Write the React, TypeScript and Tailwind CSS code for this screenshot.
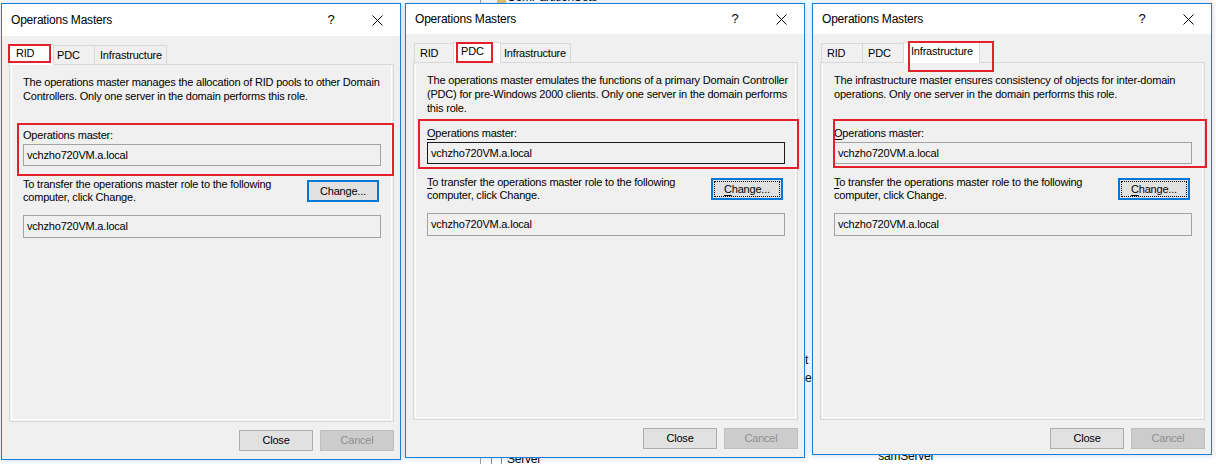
import React from "react";

type Role = {
    active: number;
    desc: string[];
    focused: boolean;
    outer: string;
    titleBar: string;
    bottomGap: string;
};

const tabs = [
    { label: "RID", w: "w-[42px]", ws: "w-[46px]" },
    { label: "PDC", w: "w-[44px]", ws: "w-[48px]" },
    { label: "Infrastructure", w: "w-[73px]", ws: "w-[77px]" },
];

const roles: Role[] = [
    {
        active: 0,
        desc: [
            "The operations master manages the allocation of RID pools to other Domain",
            "Controllers. Only one server in the domain performs this role.",
        ],
        focused: false,
        outer: "ml-[1px] h-[457px]",
        titleBar: "h-[32px]",
        bottomGap: "pb-[8px]",
    },
    {
        active: 1,
        desc: [
            "The operations master emulates the functions of a primary Domain Controller",
            "(PDC) for pre-Windows 2000 clients. Only one server in the domain performs",
            "this role.",
        ],
        focused: true,
        outer: "ml-[4px] h-[455px]",
        titleBar: "h-[30px]",
        bottomGap: "pb-[8px]",
    },
    {
        active: 2,
        desc: [
            "The infrastructure master ensures consistency of objects for inter-domain",
            "operations. Only one server in the domain performs this role.",
        ],
        focused: false,
        outer: "ml-[7px] h-[452px]",
        titleBar: "h-[30px]",
        bottomGap: "pb-[5px]",
    },
];

const Tabs = ({ active }: { active: number }) => {
    return (
        <div className="relative z-10 mt-[8px] flex h-[20px] items-end pl-[8px]">
            {tabs.map((t, i) => {
                const sel = i === active;
                if (sel) {
                    return (
                        <div
                            key={t.label}
                            className={`relative z-10 -mb-px flex h-[21px] items-start border border-b-0 border-[#d9d9d9] bg-white pl-[7px] pt-px leading-[14px] ${t.ws} ${i === 0 ? "-ml-[2px]" : "-ml-[3px]"} -mr-[2px]`}
                        >
                            {t.label}
                        </div>
                    );
                }
                return (
                    <div
                        key={t.label}
                        className={`flex h-[19px] items-center border border-b-0 border-[#d9d9d9] bg-[#f0f0f0] pl-[5px] ${t.w} ${i === 0 ? "" : "-ml-px"}`}
                    >
                        {t.label}
                    </div>
                );
            })}
        </div>
    );
};

const Ul = ({ on, children }: { on: boolean; children: React.ReactNode }) =>
    on ? <span className="underline underline-offset-2">{children}</span> : <>{children}</>;

const Dialog = ({ role }: { role: Role }) => {
    const f = role.focused || role.active === 2;
    return (
        <div
            className={`relative z-10 flex w-[400px] flex-col border border-[#1c7fd6] bg-[#f0f0f0] shadow-[0_0_6px_rgba(40,120,210,0.3)] ${role.outer} ${role.bottomGap}`}
        >
            {/* title bar */}
            <div className={`flex items-center bg-white ${role.titleBar}`}>
                <div className="flex-1 pl-[9px] text-[12px]">Operations Masters</div>
                <div className="w-[46px] text-center text-[13px]">?</div>
                <div className="flex w-[46px] justify-center">
                    <svg width="11" height="11" viewBox="0 0 11 11">
                        <path d="M0.5 0.5 L10.5 10.5 M10.5 0.5 L0.5 10.5" stroke="#000" strokeWidth="1" />
                    </svg>
                </div>
            </div>

            <Tabs active={role.active} />

            {/* tab page */}
            <div className="relative z-0 ml-[7px] h-[358px] w-[385px] border border-[#d9d9d9] bg-[#f0f0f0] p-px">
                <div className="h-full border-x border-b border-white pl-[11px] pt-[9px]">
                    <div className="h-[53px] leading-[14px]">
                        {role.desc.map((l) => (
                            <div key={l} className="whitespace-nowrap">
                                {l}
                            </div>
                        ))}
                    </div>
                    <div className="h-[14px] leading-[14px]">
                        <Ul on={f}>O</Ul>perations master:
                    </div>
                    <div
                        className={`mt-[2px] flex h-[22px] w-[358px] items-center border pl-[3px] ${role.focused ? "border-[#1a1a1a]" : "border-[#a3a3a3]"}`}
                    >
                        vchzho720VM.a.local
                    </div>
                    <div className="mt-[12px] flex w-[358px] justify-between">
                        <div className="leading-[13px]">
                            <div>
                                <Ul on={f}>T</Ul>o transfer the operations master role to the following
                            </div>
                            <div>computer, click Change.</div>
                        </div>
                        <div
                            className={`mr-[2px] mt-[2px] flex h-[22px] w-[72px] items-center justify-center border-2 border-[#0078d7] bg-[#e1e1e1] ${f ? "outline-1 outline-dotted outline-black outline-offset-[-4px]" : ""}`}
                        >
                            <span>
                                <Ul on={f}>C</Ul>hange...
                            </span>
                        </div>
                    </div>
                    <div className="mt-[11px] flex h-[23px] w-[358px] items-center border border-[#a3a3a3] pl-[3px]">
                        vchzho720VM.a.local
                    </div>
                </div>
            </div>

            {/* buttons */}
            <div className="ml-[7px] mt-[8px] flex w-[385px] justify-end gap-[7px]">
                <div className="flex h-[21px] w-[74px] items-center justify-center border border-[#adadad] bg-[#e1e1e1]">
                    Close
                </div>
                <div className="flex h-[21px] w-[74px] items-center justify-center border border-[#bfbfbf] bg-[#cccccc] text-[#8f8f8f]">
                    Cancel
                </div>
            </div>
        </div>
    );
};

// the ADSI console window that peeks out behind the dialogs
const ConsoleBehind = () => (
    <div className="absolute left-[480px] top-[-10px] z-0 flex h-[476px] w-[460px] flex-col text-[12px] leading-[14px]">
        <div className="flex h-[14px] items-end">
            <div className="h-[14px] w-px bg-[#a0a0a0]" />
            <div className="ml-[16px] h-[9px] w-[9px] bg-[#e9c46a]" />
            <div className="ml-px">ComPartitionSets</div>
        </div>
        <div className="ml-[325px] mt-[349px] flex flex-col gap-[4px]">
            <div>t</div>
            <div>er</div>
        </div>
        <div className="mt-[64px] flex items-start">
            <div className="mt-[7px] h-[9px] w-px bg-[#a0a0a0]" />
            <div className="ml-[10px] mt-[7px] h-[11px] w-[11px] border border-[#8a8a8a] bg-white" />
            <div className="ml-[5px] mt-[3px]">Server</div>
            <div className="ml-[337px]">samServer</div>
        </div>
    </div>
);

const App = () => {
    return (
        <div className="relative h-[464px] w-[1216px] overflow-hidden bg-white font-['Liberation_Sans',Arial,sans-serif] text-[11px] tracking-[-0.2px] text-black">
            <ConsoleBehind />

            <div className="relative z-10 flex items-start pt-[3px]">
                {roles.map((r) => (
                    <Dialog key={r.active} role={r} />
                ))}
            </div>

            {/* red annotation boxes */}
            <div className="absolute left-[8px] top-[44px] z-20 h-[19px] w-[43px] border-2 border-[#e5202e]" />
            <div className="absolute left-[17px] top-[123px] z-20 h-[53px] w-[377px] border-2 border-[#e5202e]" />
            <div className="absolute left-[456px] top-[42px] z-20 h-[21px] w-[37px] border-2 border-[#e5202e]" />
            <div className="absolute left-[418px] top-[119px] z-20 h-[50px] w-[381px] border-2 border-[#e5202e]" />
            <div className="absolute left-[908px] top-[41px] z-20 h-[31px] w-[86px] border-2 border-[#e5202e]" />
            <div className="absolute left-[833px] top-[119px] z-20 h-[49px] w-[374px] border-2 border-[#e5202e]" />
        </div>
    );
};

export default App;
